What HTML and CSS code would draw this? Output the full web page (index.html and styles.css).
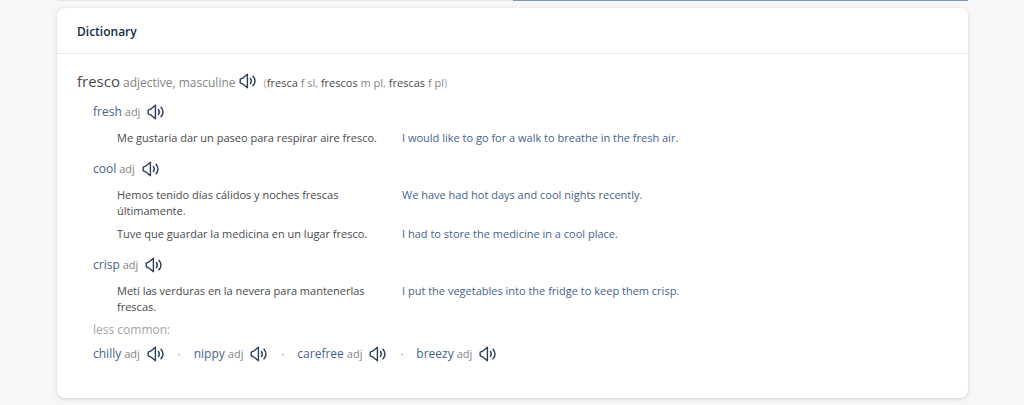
FILE: index.html
```
<!DOCTYPE html>
<html lang="en">
<head>
    <meta charset="UTF-8">
    <meta name="viewport" content="width=device-width, initial-scale=1.0">
    <title>Dictionary</title>
    <link rel="stylesheet" href="styles.css">
</head>
<body>
    <svg width="0" height="0" class="sprite" aria-hidden="true">
        <symbol id="speaker" viewBox="0 0 18 16">
            <path d="M1.2 6.2L3.6 5.2L8.4 1.2V14.8L3.6 10.8L1.2 9.8Z"/>
            <path d="M11.4 5.4Q13.2 8 11.4 10.6"/>
            <path d="M14 3.2Q18 8 14 12.8"/>
        </symbol>
    </svg>

    <!-- bottom edge of the translator panes -->
    <div class="translator">
        <div class="pane"></div>
        <div class="pane active"></div>
    </div>

    <main class="card">
        <h1>Dictionary</h1>

        <div class="entry">
            <div class="headword">
                <h2>fresco</h2>
                <span class="wordtype">adjective, masculine</span>
                <button type="button" class="audio" aria-label="Listen to fresco"><svg><use href="#speaker"/></svg></button>
                <span class="forms">(<b>fresca</b> <i>f sl</i>, <b>frescos</b> <i>m pl</i>, <b>frescas</b> <i>f pl</i>)</span>
            </div>

            <section class="sense">
                <div class="word">
                    <a href="#fresh">fresh</a> <span class="type">adj</span>
                    <button type="button" class="audio" aria-label="Listen to fresh"><svg><use href="#speaker"/></svg></button>
                </div>
                <div class="example">
                    <p lang="es">Me gustaría dar un paseo para respirar aire fresco.</p>
                    <p class="target">I would like to go for a walk to breathe in the fresh air.</p>
                </div>
            </section>

            <section class="sense">
                <div class="word">
                    <a href="#cool">cool</a> <span class="type">adj</span>
                    <button type="button" class="audio" aria-label="Listen to cool"><svg><use href="#speaker"/></svg></button>
                </div>
                <div class="example">
                    <p lang="es">Hemos tenido días cálidos y noches frescas últimamente.</p>
                    <p class="target">We have had hot days and cool nights recently.</p>
                </div>
                <div class="example">
                    <p lang="es">Tuve que guardar la medicina en un lugar fresco.</p>
                    <p class="target">I had to store the medicine in a cool place.</p>
                </div>
            </section>

            <section class="sense">
                <div class="word">
                    <a href="#crisp">crisp</a> <span class="type">adj</span>
                    <button type="button" class="audio" aria-label="Listen to crisp"><svg><use href="#speaker"/></svg></button>
                </div>
                <div class="example">
                    <p lang="es">Metí las verduras en la nevera para mantenerlas frescas.</p>
                    <p class="target">I put the vegetables into the fridge to keep them crisp.</p>
                </div>
            </section>

            <h3>less common:</h3>
            <div class="less-common">
                <div class="word">
                    <a href="#chilly">chilly</a> <span class="type">adj</span>
                    <button type="button" class="audio" aria-label="Listen to chilly"><svg><use href="#speaker"/></svg></button>
                </div>
                <span class="dot">·</span>
                <div class="word">
                    <a href="#nippy">nippy</a> <span class="type">adj</span>
                    <button type="button" class="audio" aria-label="Listen to nippy"><svg><use href="#speaker"/></svg></button>
                </div>
                <span class="dot">·</span>
                <div class="word">
                    <a href="#carefree">carefree</a> <span class="type">adj</span>
                    <button type="button" class="audio" aria-label="Listen to carefree"><svg><use href="#speaker"/></svg></button>
                </div>
                <span class="dot">·</span>
                <div class="word">
                    <a href="#breezy">breezy</a> <span class="type">adj</span>
                    <button type="button" class="audio" aria-label="Listen to breezy"><svg><use href="#speaker"/></svg></button>
                </div>
            </div>
        </div>
    </main>
</body>
</html>
```
FILE: styles.css
```
* {
    box-sizing: border-box;
}
body {
    margin: 0;
    padding: 0 56px 0 57px;
    background: #f7f7f8;
    color: #4a4a4a;
    font-family: "Open Sans", "Noto Sans", sans-serif;
    font-size: 11px;
    line-height: 16px;
}
h1, h2, h3, p {
    margin: 0;
    font-weight: 400;
}
.sprite {
    display: block;
}
.translator {
    display: flex;
    height: 1px;
    margin-bottom: 7px;
}
.pane {
    flex: 1;
    background: #e6e6e6;
}
.pane.active {
    background: #7f9ab5;
}
.card {
    margin-bottom: 7px;
    padding-bottom: 32px;
    background: #fff;
    border-radius: 8px;
    box-shadow: 0 1px 4px rgba(0, 0, 0, 0.15);
}
.card h1 {
    padding: 14px 20px 11px;
    border-bottom: 1px solid #e6eaee;
    color: #0f2b46;
    font-size: 12px;
    font-weight: 600;
    line-height: 20px;
}
.entry {
    padding: 16px 20px 0;
}
.headword {
    display: flex;
    align-items: baseline;
    gap: 3px;
    height: 22px;
    line-height: 22px;
}
.headword h2 {
    font-size: 15px;
}
.wordtype {
    color: #848484;
    font-size: 12px;
}
.audio {
    align-self: center;
    width: 18px;
    height: 16px;
    padding: 0;
    border: 0;
    background: none;
    cursor: pointer;
}
.audio svg {
    display: block;
    width: 18px;
    height: 16px;
    fill: none;
    stroke: #2b3f58;
    stroke-width: 1.4;
    stroke-linejoin: round;
    stroke-linecap: round;
}
.forms {
    margin-left: 4px;
    color: #a5a5a5;
}
.forms b {
    color: #4a4a4a;
    font-weight: 400;
}
.forms i {
    color: #848484;
    font-style: normal;
}
.sense {
    margin: 8px 0 0 16px;
}
.word {
    display: flex;
    align-items: baseline;
    gap: 3px;
    height: 24px;
    line-height: 24px;
}
.word a {
    color: #46638a;
    font-size: 12px;
    text-decoration: none;
}
.word a:hover {
    text-decoration: underline;
}
.type {
    color: #848484;
}
.word .audio {
    margin-left: 4px;
}
.example {
    display: grid;
    grid-template-columns: 1fr 2fr;
    gap: 20px;
    padding: 4px 16px 3px 24px;
}
.word + .example {
    margin-top: 2px;
}
.target {
    color: #46638a;
}
.entry h3 {
    margin-left: 16px;
    color: #a5a5a5;
    font-size: 12px;
    line-height: 24px;
}
.less-common {
    display: flex;
    align-items: center;
    gap: 13px;
    margin-left: 16px;
}
.dot {
    color: #848484;
}
```
